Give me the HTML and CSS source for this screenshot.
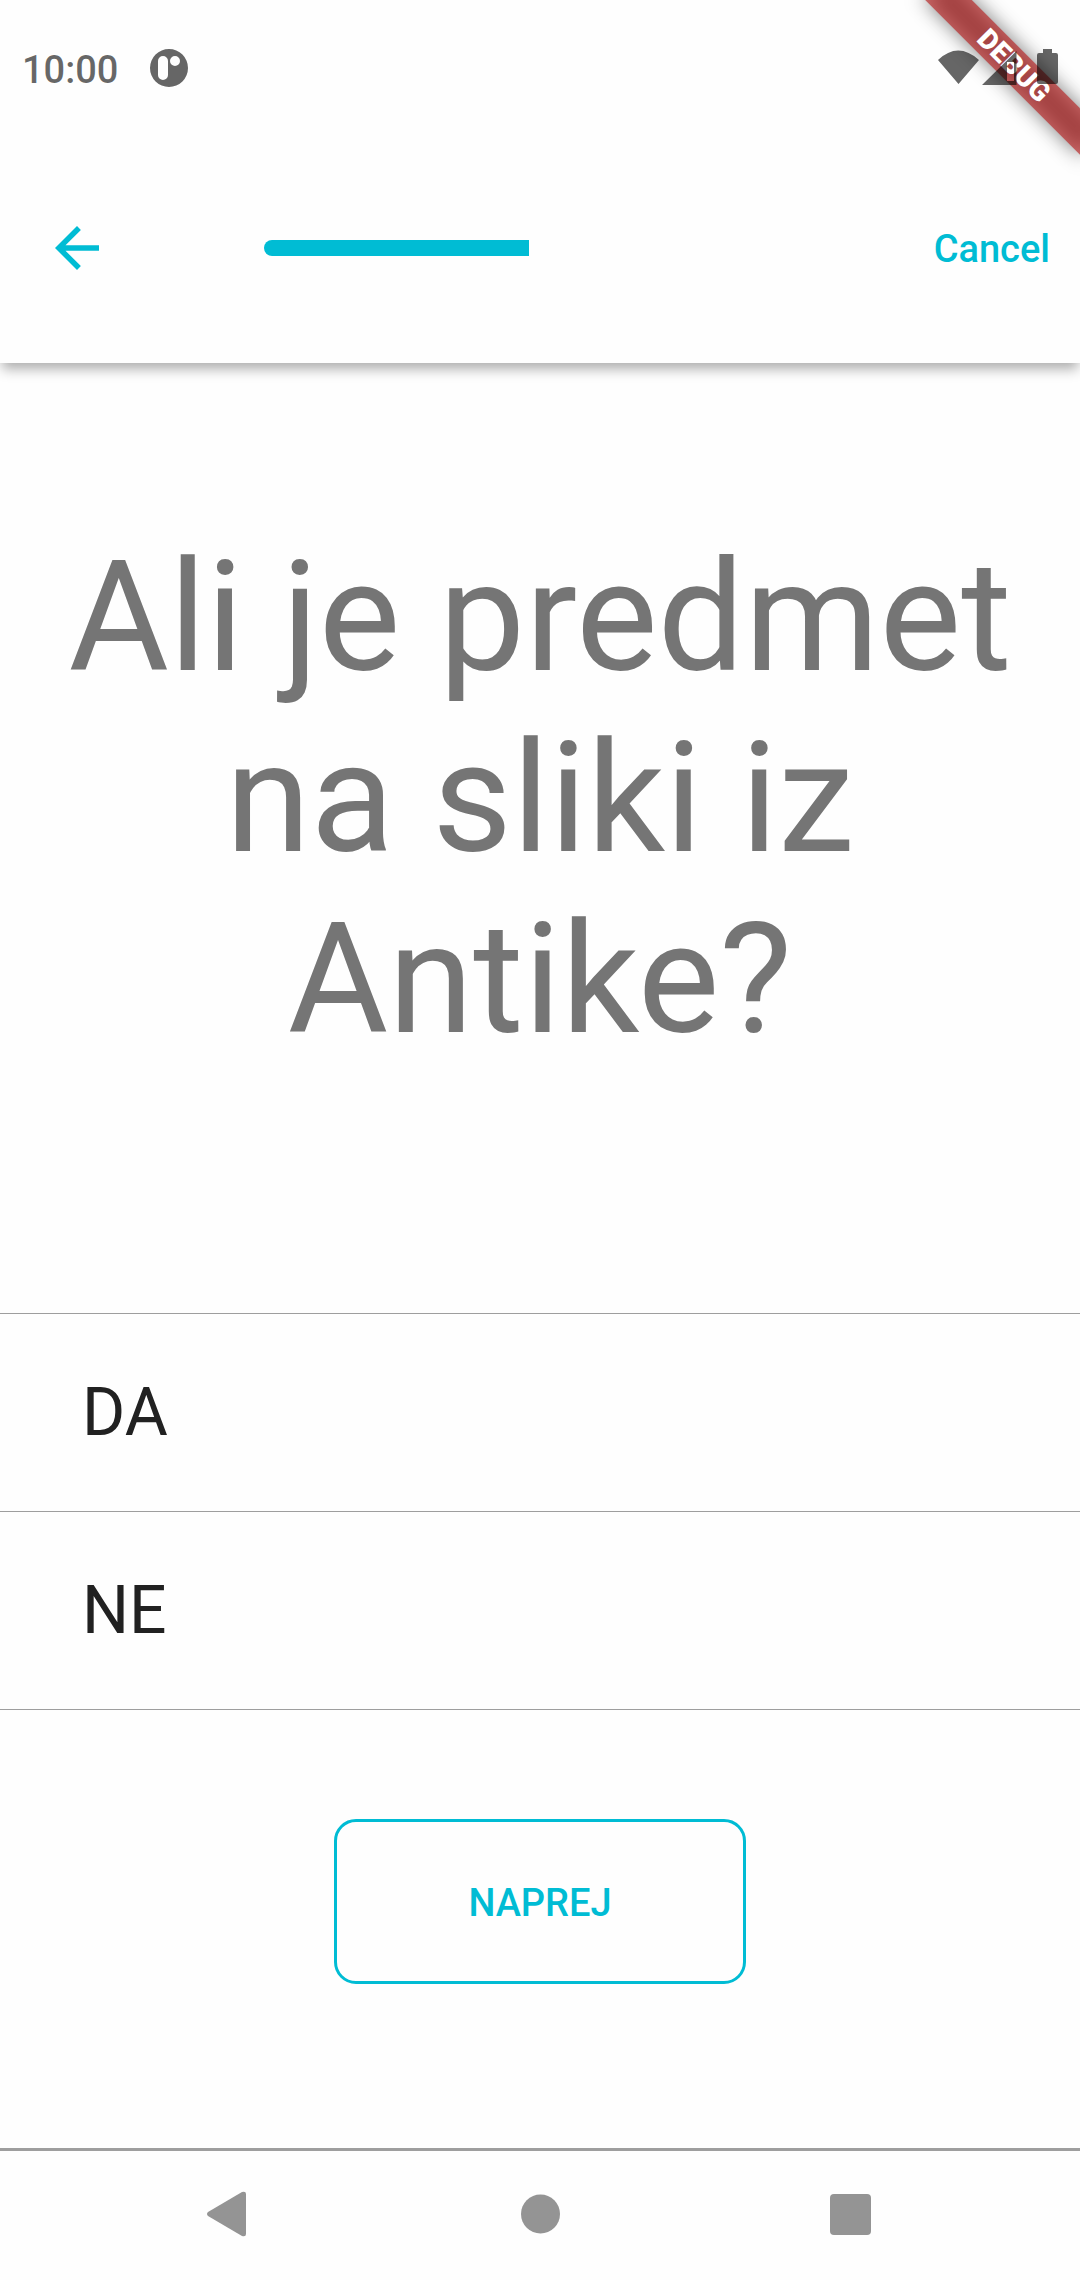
FILE: index.html
```html
<!DOCTYPE html>
<html lang="sl">
<head>
<meta charset="utf-8">
<meta name="viewport" content="width=device-width, initial-scale=1">
<title>Anketa</title>
<link rel="stylesheet" href="styles.css">
</head>
<body>
<div class="debug" aria-hidden="true">
  <div class="debug-shadow"></div>
  <div class="debug-ribbon">DEBUG</div>
</div>
<header class="top">
  <div class="status">
    <span class="clock">10:00</span>
    <svg class="notice" width="38" height="38" viewBox="0 0 38 38"><path fill-rule="evenodd" d="M19 0a19 19 0 1 1 0 38a19 19 0 1 1 0-38zM13 7a5 5 0 0 0-5 5v14a5 5 0 0 0 10 0V12a5 5 0 0 0-5-5zM25 7a5 5 0 1 0 0 10a5 5 0 1 0 0-10z"/></svg>
    <svg class="signals" width="122" height="38" viewBox="0 0 122 38"><path d="M1 11Q21-8 42 11L21.500 35zM45 36L79.500 2v34zM70 13v19h7V13z" fill-rule="evenodd"/><path d="M106 0h9v4h4a2 2 0 0 1 2 2v27a2 2 0 0 1-2 2h-17a2 2 0 0 1-2-2V6a2 2 0 0 1 2-2h4z"/></svg>
  </div>
  <div class="bar">
    <button class="back" type="button" aria-label="Nazaj"><svg width="66" height="66" viewBox="0 0 24 24"><path d="M20 11H7.830l5.590-5.590L12 4l-8 8 8 8 1.410-1.410L7.830 13H20z"/></svg></button>
    <progress class="progress" value="50" max="100" aria-label="Napredek"></progress>
    <button class="cancel" type="button">Cancel</button>
  </div>
</header>
<main class="content">
  <h1 class="question">Ali je predmet na sliki iz Antike?</h1>
  <ul class="answers">
    <li><button class="answer" type="button">DA</button></li>
    <li><button class="answer" type="button">NE</button></li>
  </ul>
  <button class="next" type="button">NAPREJ</button>
</main>
<nav class="system" aria-label="Sistem">
  <button type="button" aria-label="Nazaj"><svg width="44" height="44" viewBox="0 0 44 44"><path d="M0 20L34 0q4-1 4 2v40q0 3-4 2L0 24q-2-2 0-4z"/></svg></button>
  <button type="button" aria-label="Domov"><svg width="44" height="44" viewBox="0 0 44 44"><circle cx="22.500" cy="22" r="19.500"/></svg></button>
  <button type="button" aria-label="Pregled"><svg width="44" height="44" viewBox="0 0 44 44"><rect x="2" y="2" width="41" height="41" rx="4"/></svg></button>
</nav>
</body>
</html>
```
FILE: styles.css
```css
* { box-sizing: border-box; }

body {
  margin: 0;
  min-height: 100vh;
  display: flex;
  flex-direction: column;
  position: relative;
  background: #fefefe;
  color: #212121;
  font-family: Roboto, "Noto Sans", sans-serif;
}

button {
  margin: 0;
  padding: 0;
  border: 0;
  background: none;
  color: inherit;
  font: inherit;
  cursor: pointer;
}

svg {
  display: block;
  overflow: visible;
}

.top {
  background: #fefefe;
  box-shadow: 0 8px 12px -2px rgba(0, 0, 0, .32);
}

.status {
  position: relative;
  z-index: 2;
  display: flex;
  align-items: center;
  height: 132px;
  padding: 4px 21px 0 22px;
  color: rgba(0, 0, 0, .6);
  fill: currentColor;
}

.clock {
  padding-top: 4px;
  font-size: 38px;
  font-weight: 500;
}

.notice { margin-left: 32px; }
.signals { margin-left: auto; }

.bar {
  display: grid;
  grid-template-columns: 220px minmax(0, 530px) 1fr;
  align-items: center;
  height: 231px;
  padding: 0 30px 0 44px;
  color: #00bcd4;
}

.back {
  justify-self: start;
  fill: currentColor;
}

.progress {
  appearance: none;
  width: 100%;
  height: 16px;
  border: 0;
  background: none;
}

.progress::-webkit-progress-bar { background: none; }

.progress::-webkit-progress-value {
  background: #00bcd4;
  border-radius: 8px 0 0 8px;
}

.cancel {
  justify-self: end;
  padding-top: 2px;
  font-size: 38px;
  font-weight: 500;
}

.debug {
  position: absolute;
  z-index: 1;
  top: 0;
  right: 0;
  width: 220px;
  height: 220px;
  overflow: hidden;
  pointer-events: none;
}

.debug-shadow,
.debug-ribbon {
  position: absolute;
  top: 49px;
  left: 44px;
  width: 220px;
  height: 33px;
  transform: rotate(45deg);
}

.debug-shadow {
  background: rgba(0, 0, 0, .5);
  filter: blur(10px);
}

.debug-ribbon {
  background: rgba(183, 28, 28, .63);
  color: #fff;
  font-size: 28px;
  font-weight: 900;
  line-height: 33px;
  text-align: center;
}

.content {
  flex: 1;
  display: flex;
  flex-direction: column;
  align-items: center;
}

.question {
  margin: 0;
  padding: 164px 55px 243px;
  color: #757575;
  font-size: 154px;
  font-weight: 400;
  line-height: 181px;
  text-align: center;
}

.answers {
  width: 100%;
  margin: 0;
  padding: 0;
  list-style: none;
  border-top: 1px solid #9e9e9e;
}

.answers li { border-bottom: 1px solid #9e9e9e; }

.answer {
  display: block;
  width: 100%;
  height: 197px;
  padding: 0 82px;
  font-size: 66px;
  text-align: left;
}

.next {
  width: 412px;
  height: 165px;
  margin: 109px 0;
  padding-top: 2px;
  border: 3px solid #00bcd4;
  border-radius: 22px;
  color: #00bcd4;
  font-size: 38px;
  font-weight: 500;
}

.system {
  display: flex;
  justify-content: center;
  gap: 266px;
  height: 132px;
  padding-top: 41px;
  border-top: 3px solid #9e9e9e;
  fill: #949494;
}

.system button { height: 44px; }
```
